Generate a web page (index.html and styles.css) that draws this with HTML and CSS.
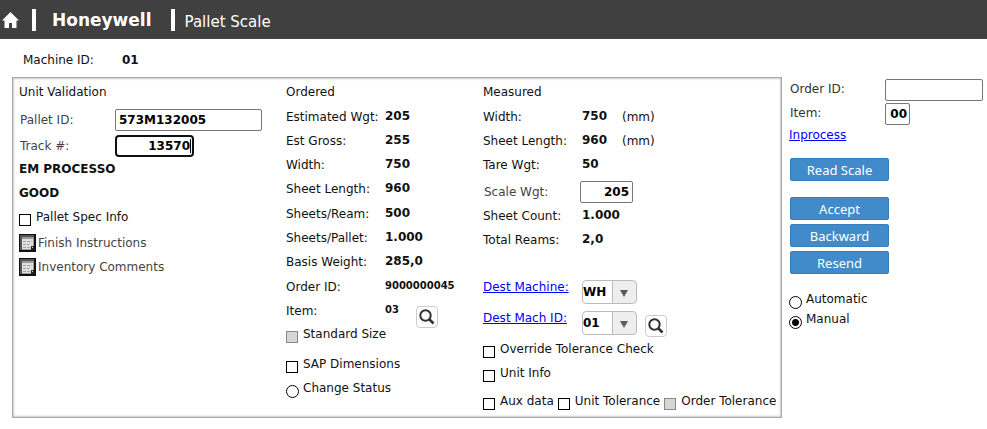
FILE: index.html
```html
<!DOCTYPE html>
<html lang="en">
<head>
<meta charset="utf-8">
<title>Honeywell | Pallet Scale</title>
<link rel="stylesheet" href="styles.css">
</head>
<body>
<svg class="defs" aria-hidden="true">
  <symbol id="search" viewBox="0 0 16 16"><circle cx="6.5" cy="6.5" r="5.2" fill="none" stroke="#333" stroke-width="2"/><path d="M10 10l4.500 4.500" stroke="#333" stroke-width="2.6"/></symbol>
  <symbol id="note" viewBox="0 0 17 18"><path d="M0 0h17v18H0z" fill="#111"/><path d="M1 1h14v15H1z" fill="#999"/><path d="M1 1h14v2H3v13H1z" fill="#555"/><path d="M3 5h11v9h-2v1H3z" fill="#e0e0e0"/><path d="M4 7.500h9M4 10.500h8M4 13.500h7" stroke="#a5a5a5" stroke-dasharray="3 1"/><path d="M12 12h3v4h-3z" fill="#222"/><path d="M13 13h1v1h-1z" fill="#ddd"/></symbol>
</svg>
<header class="topbar">
  <a class="home" href="#" aria-label="Home"><svg viewBox="0 0 17 16"><path d="M8.500 0L0 8.500h2.500V16H7v-5h3v5h4.500V8.500H17z" fill="#fff"/></svg></a>
  <span class="bar"></span>
  <strong class="brand">Honeywell</strong>
  <span class="bar"></span>
  <h1 class="page-title">Pallet Scale</h1>
</header>
<div class="machine"><span>Machine ID:</span><b>01</b></div>
<main class="content">
  <div class="panel">
    <section class="unit">
      <h2>Unit Validation</h2>
      <div class="fields">
        <label for="pallet">Pallet ID:</label><input class="box" id="pallet" value="573M132005">
        <label for="track">Track #:</label><span class="active"><input class="box" id="track" value="13570"></span>
      </div>
      <div class="status"><b>EM PROCESSO</b><b>GOOD</b></div>
      <label class="check"><input type="checkbox">Pallet Spec Info</label>
      <div class="notes">
        <button type="button"><svg><use href="#note"/></svg>Finish Instructions</button>
        <button type="button"><svg><use href="#note"/></svg>Inventory Comments</button>
      </div>
    </section>
    <section class="ordered">
      <h2>Ordered</h2>
      <dl>
        <div><dt>Estimated Wgt:</dt><dd>205</dd></div>
        <div><dt>Est Gross:</dt><dd>255</dd></div>
        <div><dt>Width:</dt><dd>750</dd></div>
        <div><dt>Sheet Length:</dt><dd>960</dd></div>
      </dl>
      <dl>
        <div><dt>Sheets/Ream:</dt><dd>500</dd></div>
        <div><dt>Sheets/Pallet:</dt><dd>1.000</dd></div>
        <div><dt>Basis Weight:</dt><dd>285,0</dd></div>
      </dl>
      <dl class="order">
        <div><dt>Order ID:</dt><dd>9000000045</dd></div>
        <div><dt>Item:</dt><dd>03</dd><dd><button type="button" class="search" aria-label="Find order item"><svg><use href="#search"/></svg></button></dd></div>
      </dl>
      <label class="check"><input type="checkbox" disabled>Standard Size</label>
      <label class="check spaced"><input type="checkbox">SAP Dimensions</label>
      <label class="check near"><input type="radio" name="change">Change Status</label>
    </section>
    <section class="measured">
      <h2>Measured</h2>
      <dl>
        <div><dt>Width:</dt><dd>750</dd><dd class="mm">(mm)</dd></div>
        <div><dt>Sheet Length:</dt><dd>960</dd><dd class="mm">(mm)</dd></div>
        <div><dt>Tare Wgt:</dt><dd>50</dd></div>
      </dl>
      <div class="scale"><label for="scale">Scale Wgt:</label><input class="box" id="scale" value="205"></div>
      <dl>
        <div><dt>Sheet Count:</dt><dd>1.000</dd></div>
        <div><dt>Total Reams:</dt><dd>2,0</dd></div>
      </dl>
      <div class="dests">
        <div class="dest"><a href="#">Dest Machine:</a><span class="combo"><select aria-label="Dest Machine"><option>WH</option></select></span></div>
        <div class="dest"><a href="#">Dest Mach ID:</a><span class="combo"><select aria-label="Dest Mach ID"><option>01</option></select></span><button type="button" class="search" aria-label="Find machine"><svg><use href="#search"/></svg></button></div>
      </div>
      <label class="check"><input type="checkbox">Override Tolerance Check</label>
      <label class="check near"><input type="checkbox">Unit Info</label>
      <div class="check-row">
        <label class="check"><input type="checkbox">Aux data</label>
        <label class="check"><input type="checkbox">Unit Tolerance</label>
        <label class="check"><input type="checkbox" disabled>Order Tolerance</label>
      </div>
    </section>
  </div>
  <aside class="side">
    <div class="lookup">
      <label for="order">Order ID:</label><input class="box" id="order">
      <label for="item">Item:</label><input class="box" id="item" value="00">
    </div>
    <a class="inprocess" href="#">Inprocess</a>
    <div class="actions">
      <button type="button" class="read">Read Scale</button>
      <button type="button">Accept</button>
      <button type="button">Backward</button>
      <button type="button">Resend</button>
    </div>
    <div class="modes">
      <label class="check"><input type="radio" name="mode">Automatic</label>
      <label class="check"><input type="radio" name="mode" checked>Manual</label>
    </div>
  </aside>
</main>
</body>
</html>
```
FILE: styles.css
```css
* { box-sizing: border-box; }
body { margin: 0; background: #fff; color: #111; font: 12px/20px "DejaVu Sans", Verdana, sans-serif; }
h1, h2, dl, dd { margin: 0; font-size: 12px; font-weight: normal; }
input, select, button { font: inherit; color: inherit; margin: 0; }
label { white-space: nowrap; }
a { color: #00f; }
.defs { display: none; }

.topbar { display: flex; align-items: center; height: 39px; padding-left: 2px; background: #404040; color: #fff; }
.home svg { display: block; width: 17px; height: 16px; }
.bar { width: 4px; height: 22px; margin: 0 16px 0 13px; background: #fff; }
.brand { font-size: 17px; }
.topbar .bar:nth-of-type(2) { margin: 0 10px 0 19px; }
.page-title { font-size: 15px; padding-top: 4px; }

.machine { display: flex; gap: 28px; padding: 11px 23px 7px; }

.content { display: flex; align-items: flex-start; gap: 7px; padding: 0 4px 10px 12px; }
.panel { flex: 1; display: grid; grid-template-columns: 267px 197px 1fr; min-height: 341px; padding: 2px 1px 3px 6px; border: 1px solid #a8a8a8; box-shadow: inset 0 0 2px 1px #ccc; }
h2 { line-height: 25px; }

.box { height: 22px; padding: 0 3px; border: 1px solid #767676; border-radius: 2px; background: #fff; color: #000; font-weight: bold; }
.fields { display: grid; grid-template-columns: 95px 1fr; row-gap: 4px; align-items: center; margin: 4px 0 2px 1px; color: #444; }
#pallet { width: 147px; }
.active { position: relative; width: 79px; }
.active::after { content: ""; position: absolute; right: 3px; top: 4px; width: 1px; height: 14px; background: #000; }
#track { display: block; width: 100%; border: 2px solid #101010; border-radius: 4px; padding: 0 2px; text-align: right; }
.status { display: grid; gap: 4px; margin-bottom: 4px; }
.notes { display: grid; gap: 6px; margin-top: 7px; }
.notes button { display: flex; align-items: center; gap: 2px; height: 18px; padding: 0; border: 0; background: none; color: #444; }
.notes svg { width: 17px; height: 18px; }

.check { display: flex; align-items: flex-start; gap: 5px; height: 20px; }
.check input { appearance: none; flex: none; width: 12px; height: 12px; margin-top: 7px; border: 1px solid #000; background: #fff; }
.check input:disabled { border-color: #888; background: #d6d6d6; }
.check input[type="radio"] { width: 13px; height: 13px; border-radius: 50%; margin-right: -1px; }
.check input[type="radio"]:checked { background: radial-gradient(circle, #000 3px, #fff 4px); }
.spaced { margin-top: 10px; }
.near { margin-top: 4px; }

dl { margin-bottom: 1px; }
dl div { display: grid; grid-template-columns: 99px 40px 1fr; align-items: start; height: 24px; }
dt, .mm { padding-top: 2px; white-space: nowrap; }
dd { padding-top: 1px; font-weight: bold; }
.mm { font-weight: normal; padding-top: 2px; }
.order dd { font-size: 10px; }
.order div { grid-template-columns: 99px 31px 1fr; }
.search { display: grid; place-items: center; width: 22px; height: 22px; padding: 0; border: 1px solid #ccc; border-radius: 4px; background: #fff; }
.search svg { width: 16px; height: 16px; }
.order .search { margin-top: 6px; }

.scale { display: grid; grid-template-columns: 96px 53px; align-items: center; margin: 4px 0 1px 1px; color: #444; }
.scale .box, #item { text-align: right; }
.dests { display: grid; gap: 7px; margin: 28px 0 4px; }
.dest { display: grid; grid-template-columns: 99px 55px 22px; align-items: start; height: 24px; white-space: nowrap; }
.dest a { margin-top: -3px; }
.dest .search { margin: 4px 0 0 8px; }
.combo { position: relative; display: block; }
.combo select { appearance: none; display: block; width: 100%; height: 24px; padding: 0; border: 1px solid #bbb; border-radius: 4px; background: linear-gradient(90deg, #fff 29px, #bbb 29px, #bbb 30px, #eee 30px); color: #000; font-weight: bold; }
.combo::after { content: ""; position: absolute; right: 9px; top: 10px; border: 4px solid transparent; border-top: 7px solid #635a55; border-bottom: 0; pointer-events: none; }
.check-row { display: flex; gap: 4px; margin-top: 8px; }

.side { width: 194px; }
.lookup { display: grid; grid-template-columns: 95px 1fr; gap: 2px 0; margin: 2px 0 0 1px; color: #333; }
#order { width: 100%; min-width: 0; }
#item { width: 25px; padding: 0 2px; }
.inprocess { display: inline-block; }
.actions { display: grid; gap: 4px; width: 99px; margin: 13px 0 15px 1px; }
.actions button { height: 23px; padding: 0; border: 1px solid #357ebd; border-radius: 2px; background: #428bca; color: #fff; font: 13px/20px "Noto Sans", sans-serif; }
.actions .read { margin-bottom: 12px; }
```
